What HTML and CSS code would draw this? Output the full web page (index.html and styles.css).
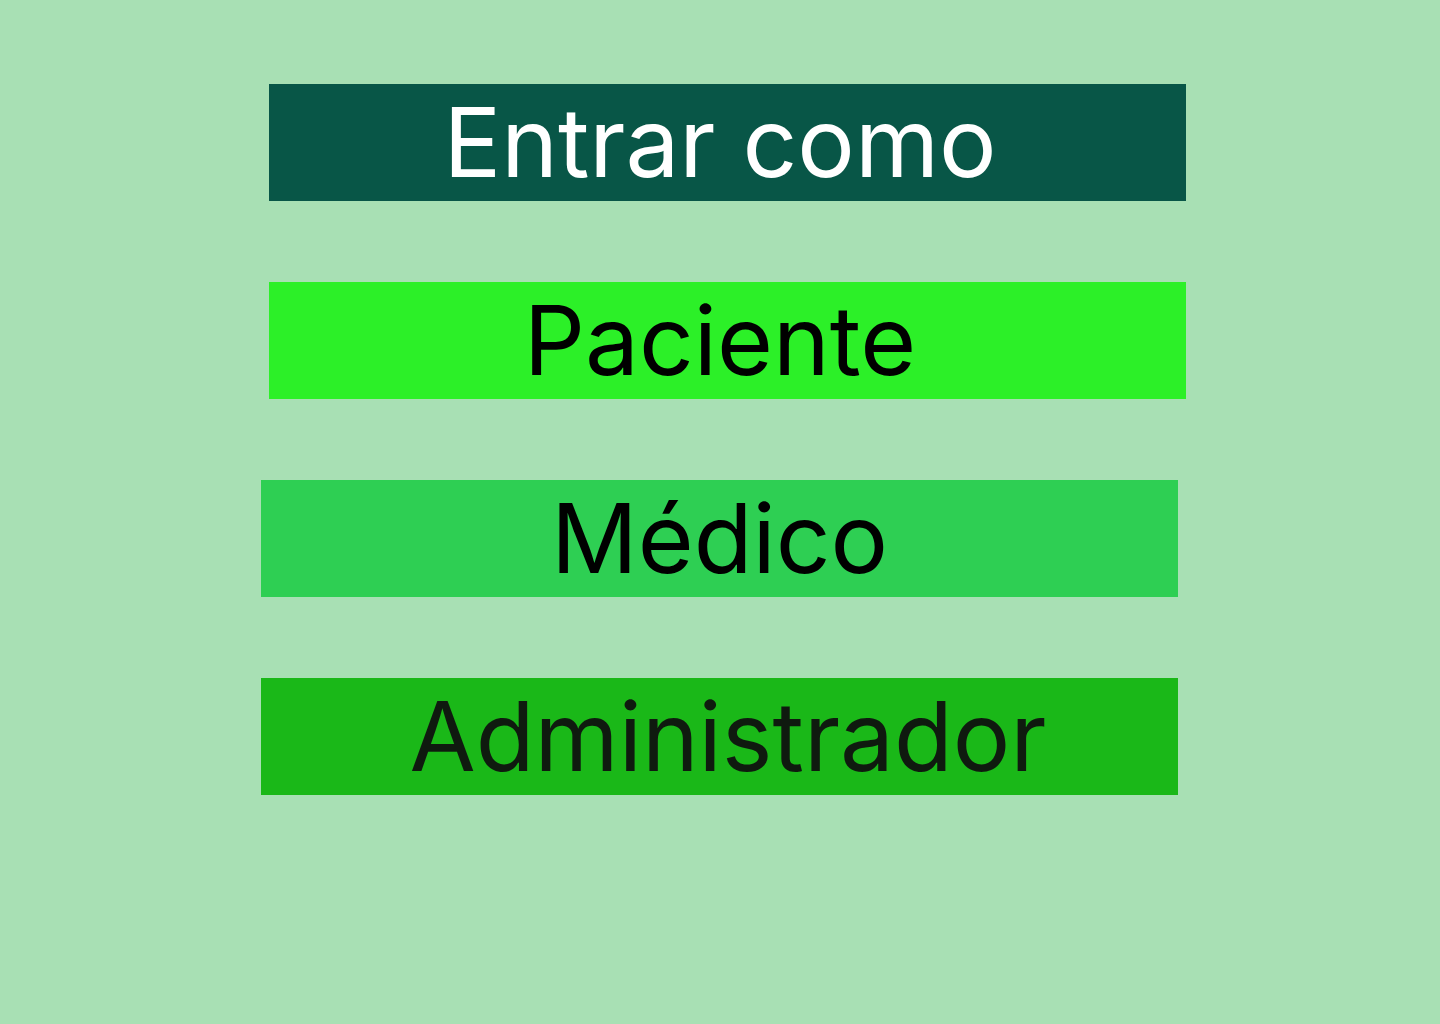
FILE: index.html
```html
<!DOCTYPE html>
<html lang="pt">
<head>
<meta charset="utf-8">
<title>Entrar como</title>
<link rel="stylesheet" href="styles.css">
</head>
<body>
<main class="page">
  <div class="title">Entrar como</div>
  <nav class="options">
    <a class="opt opt-paciente" href="#">Paciente</a>
    <a class="opt opt-medico" href="#">Médico</a>
    <a class="opt opt-admin" href="#">Administrador</a>
  </nav>
</main>
</body>
</html>
```
FILE: styles.css
```css
html, body {
  margin: 0;
  padding: 0;
}
body {
  background: #a8e0b4;
  width: 1440px;
  height: 1024px;
  font-family: Inter, "Noto Sans", sans-serif;
}
.page {
  display: flex;
  flex-direction: column;
  padding-top: 84px;
  padding-left: 269px;
}
.title,
.opt {
  display: block;
  width: 917px;
  height: 117px;
  line-height: 117px;
  font-size: 96px;
  font-weight: 400;
  text-align: center;
  text-decoration: none;
  white-space: nowrap;
}
.title {
  background: #085647;
  color: #ffffff;
  padding-right: 15px;
  box-sizing: border-box;
}
.options {
  display: flex;
  flex-direction: column;
  gap: 81px;
  margin-top: 81px;
}
.opt-paciente {
  background: #2cf028;
  color: #000000;
  padding-right: 15px;
  box-sizing: border-box;
}
.opt-medico {
  background: #2ecf53;
  color: #000000;
  margin-left: -8px;
}
.opt-admin {
  background: #1ab818;
  color: #0f1a0f;
  margin-left: -8px;
  padding-left: 17px;
  box-sizing: border-box;
}
```
